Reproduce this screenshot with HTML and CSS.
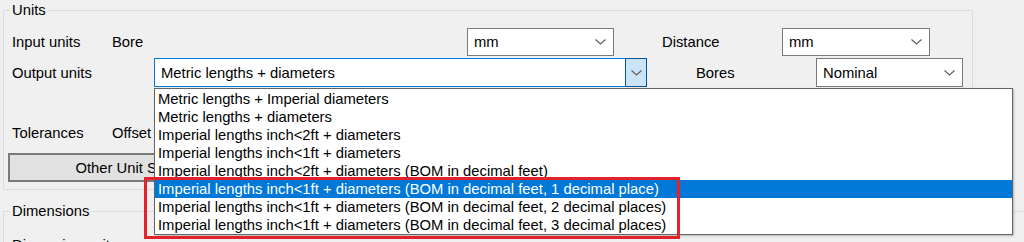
FILE: index.html
```html
<!DOCTYPE html>
<html lang="en">
<head>
  <meta charset="UTF-8">
  <title>Units</title>
  <link rel="stylesheet" href="styles.css">
</head>
<body>
<fieldset class="group group-units">
  <legend>Units</legend>
  <div class="row row-input">
    <span class="lbl lbl-first">Input units</span>
    <span class="lbl lbl-bore">Bore</span>
    <div class="combo combo-mm1">
      <span>mm</span>
      <svg class="chev" width="11" height="6" viewBox="0 0 11 6"><polyline points="0.5,0.5 5.5,5 10.5,0.5"/></svg>
    </div>
    <span class="lbl lbl-side lbl-distance">Distance</span>
    <div class="combo combo-mm2">
      <span>mm</span>
      <svg class="chev" width="11" height="6" viewBox="0 0 11 6"><polyline points="0.5,0.5 5.5,5 10.5,0.5"/></svg>
    </div>
  </div>
  <div class="row row-output">
    <span class="lbl lbl-output">Output units</span>
    <div class="combo combo-open">
      <span>Metric lengths + diameters</span>
      <span class="drop-btn">
        <svg class="chev" width="11" height="6" viewBox="0 0 11 6"><polyline points="0.5,0.5 5.5,5 10.5,0.5"/></svg>
      </span>
      <ul class="droplist">
        <li>Metric lengths + Imperial diameters</li>
        <li>Metric lengths + diameters</li>
        <li>Imperial lengths inch&lt;2ft + diameters</li>
        <li>Imperial lengths inch&lt;1ft + diameters</li>
        <li>Imperial lengths inch&lt;2ft + diameters (BOM in decimal feet)</li>
        <li class="selected">Imperial lengths inch&lt;1ft + diameters (BOM in decimal feet, 1 decimal place)</li>
        <li>Imperial lengths inch&lt;1ft + diameters (BOM in decimal feet, 2 decimal places)</li>
        <li>Imperial lengths inch&lt;1ft + diameters (BOM in decimal feet, 3 decimal places)</li>
      </ul>
    </div>
    <span class="lbl lbl-side lbl-bores">Bores</span>
    <div class="combo combo-nominal">
      <span>Nominal</span>
      <svg class="chev" width="11" height="6" viewBox="0 0 11 6"><polyline points="0.5,0.5 5.5,5 10.5,0.5"/></svg>
    </div>
  </div>
  <div class="row row-tol">
    <span class="lbl lbl-first">Tolerances</span>
    <span class="lbl">Offset</span>
  </div>
  <button class="btn-other">Other Unit Settings</button>
</fieldset>

<fieldset class="group group-dims">
  <legend>Dimensions</legend>
  <div class="row">
    <span class="lbl">Dimension units</span>
  </div>
</fieldset>

<div class="annotation"></div>
</body>
</html>
```

FILE: styles.css
```css
html, body {
  margin: 0;
  height: 242px;
  overflow: hidden;
}

body {
  background-color: #f0f0f0;
  font-family: "Liberation Sans", Arial, sans-serif;
  font-size: 14.8px;
  color: #000;
  position: relative;
}

.group {
  box-sizing: border-box;
  margin: 0 0 0 3px;
  border: 1px solid #dcdcdc;
  padding: 8px 0 7px 8px;
  min-width: 0;
}
.group legend {
  padding: 0 2px;
  margin-left: -2px;
  line-height: 20px;
  height: 20px;
}

.group-units {
  width: 970px;
}
.group-dims {
  width: 1040px;
  margin-top: 11px;
  padding-top: 14px;
}

.row {
  display: flex;
  align-items: center;
}
.row-input {
  height: 28px;
}
.row-output {
  height: 29px;
  margin-top: 2px;
}
.row-tol {
  height: 20px;
  margin-top: 36px;
}

.lbl {
  white-space: nowrap;
  line-height: 20px;
}
.lbl-first {
  width: 100px;
}
.lbl-bore {
  width: 355px;
}
.lbl-output {
  width: 142px;
}
.lbl-side {
  width: 120px;
}
.lbl-distance {
  margin-left: 48px;
}
.lbl-bores {
  margin-left: 49px;
}

/* combo boxes */
.combo {
  box-sizing: border-box;
  height: 100%;
  display: flex;
  align-items: center;
  justify-content: space-between;
  background-color: #fff;
  border: 1px solid #7a7a7a;
  padding: 0 7px 0 6px;
  position: relative;
}
.combo-mm1 {
  width: 147px;
}
.combo-mm2 {
  width: 148px;
}
.combo-nominal {
  width: 147px;
}
.chev polyline {
  fill: none;
  stroke: #606060;
  stroke-width: 1.2;
}

.combo-open {
  width: 493px;
  border-color: #0078d7;
  padding-right: 0;
  align-items: stretch;
}
.combo-open > span:first-child {
  display: flex;
  align-items: center;
}
.drop-btn {
  box-sizing: border-box;
  width: 22px;
  margin: -1px -1px -1px 0;
  background-color: #cce4f7;
  border: 1px solid #005499;
  display: flex;
  align-items: center;
  justify-content: center;
}

.droplist {
  position: absolute;
  left: -1px;
  top: 29px;
  width: 859px;
  box-sizing: border-box;
  margin: 0;
  padding: 1px 0 0;
  list-style: none;
  background-color: #fff;
  border: 1px solid #646464;
  box-shadow: 1px 1px 2px rgba(0, 0, 0, .25);
  z-index: 2;
}
.droplist li {
  height: 18px;
  line-height: 18px;
  padding: 0 3px;
  white-space: nowrap;
}
.droplist li.selected {
  background-color: #0078d7;
  color: #fff;
}

.btn-other {
  display: block;
  box-sizing: border-box;
  margin: 10px 0 0 -4px;
  width: 260px;
  height: 29px;
  font: inherit;
  color: #000;
  background-color: #e1e1e1;
  border: 2px solid #7a7a7a;
}

/* red highlight drawn over the screenshot */
.annotation {
  position: absolute;
  left: 144px;
  top: 177px;
  width: 536px;
  height: 62px;
  box-sizing: border-box;
  border: 3px solid #e3222b;
  z-index: 3;
}
```
